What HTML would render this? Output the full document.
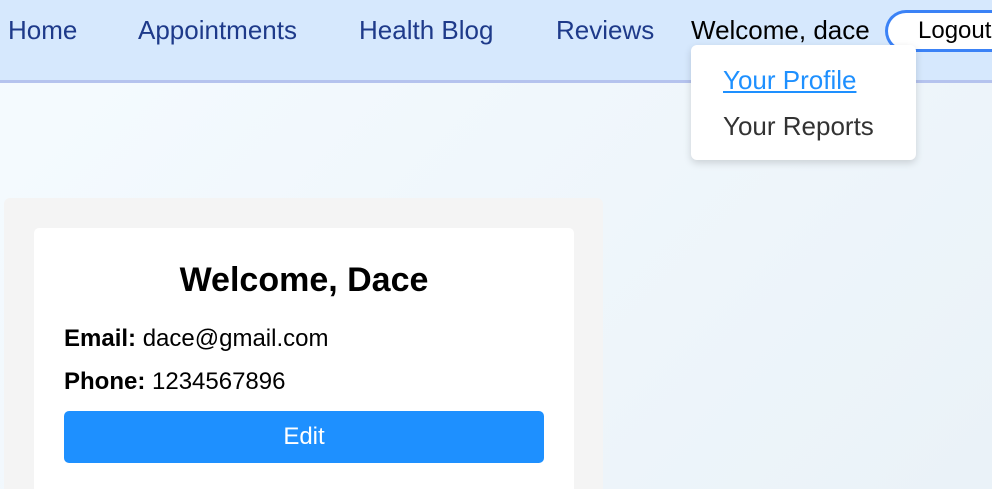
<!DOCTYPE html>
<html><head><style>
*{margin:0;padding:0;box-sizing:border-box}
html,body{width:992px;height:489px;overflow:hidden}
body{font-family:"Liberation Sans",Arial,sans-serif;background:linear-gradient(135deg,#f5fbff,#eaf2f8);position:relative}
.nav{position:absolute;left:0;top:0;width:992px;height:83px;background:#d6e8fd;border-bottom:3px solid #b5c3ee}
.nav a{position:absolute;top:15px;font-size:26px;color:#1e3a8a;text-decoration:none;line-height:30px}
.wel{position:absolute;left:691px;top:15px;font-size:26px;line-height:30px;color:#000}
.logout{position:absolute;left:885px;top:10px;width:107px;height:42px;border:3px solid #3b82f6;border-right:none;border-radius:21px 0 0 21px;background:#fff;font-size:24px;padding-left:30px;line-height:36px;overflow:hidden;white-space:nowrap}
.dd{position:absolute;left:691px;top:45px;width:225px;height:115px;background:#fff;border-radius:6px;box-shadow:0 3px 8px rgba(0,0,0,.15)}
.dd div{position:absolute;left:32px;font-size:26px;line-height:30px}
.outer{position:absolute;left:4px;top:198px;width:599px;height:291px;background:#f4f4f4;border-radius:6px 6px 0 0}
.inner{position:absolute;left:34px;top:228px;width:540px;height:261px;background:#fff;border-radius:5px 5px 0 0}
h1{position:absolute;left:0;width:540px;top:32px;text-align:center;font-size:34px;line-height:40px}
.p{position:absolute;left:30px;font-size:24px;line-height:28px}
.btn{position:absolute;left:30px;top:183px;width:480px;height:52px;background:#1e90ff;border-radius:5px;color:#fff;font-size:24px;text-align:center;line-height:52px}
</style></head><body>
<div class="nav">
<a style="left:8px">Home</a>
<a style="left:138px">Appointments</a>
<a style="left:359px">Health Blog</a>
<a style="left:556px">Reviews</a>
<span class="wel">Welcome, dace</span>
<div class="logout">Logout</div>
</div>
<div class="dd">
<div style="top:20px;color:#1e90ff;text-decoration:underline">Your Profile</div>
<div style="top:66px;color:#333">Your Reports</div>
</div>
<div class="outer"></div>
<div class="inner">
<h1>Welcome, Dace</h1>
<div class="p" style="top:97px"><b>Email:</b> dace@gmail.com</div>
<div class="p" style="top:140px"><b>Phone:</b> 1234567896</div>
<div class="btn">Edit</div>
</div>
</body></html>
